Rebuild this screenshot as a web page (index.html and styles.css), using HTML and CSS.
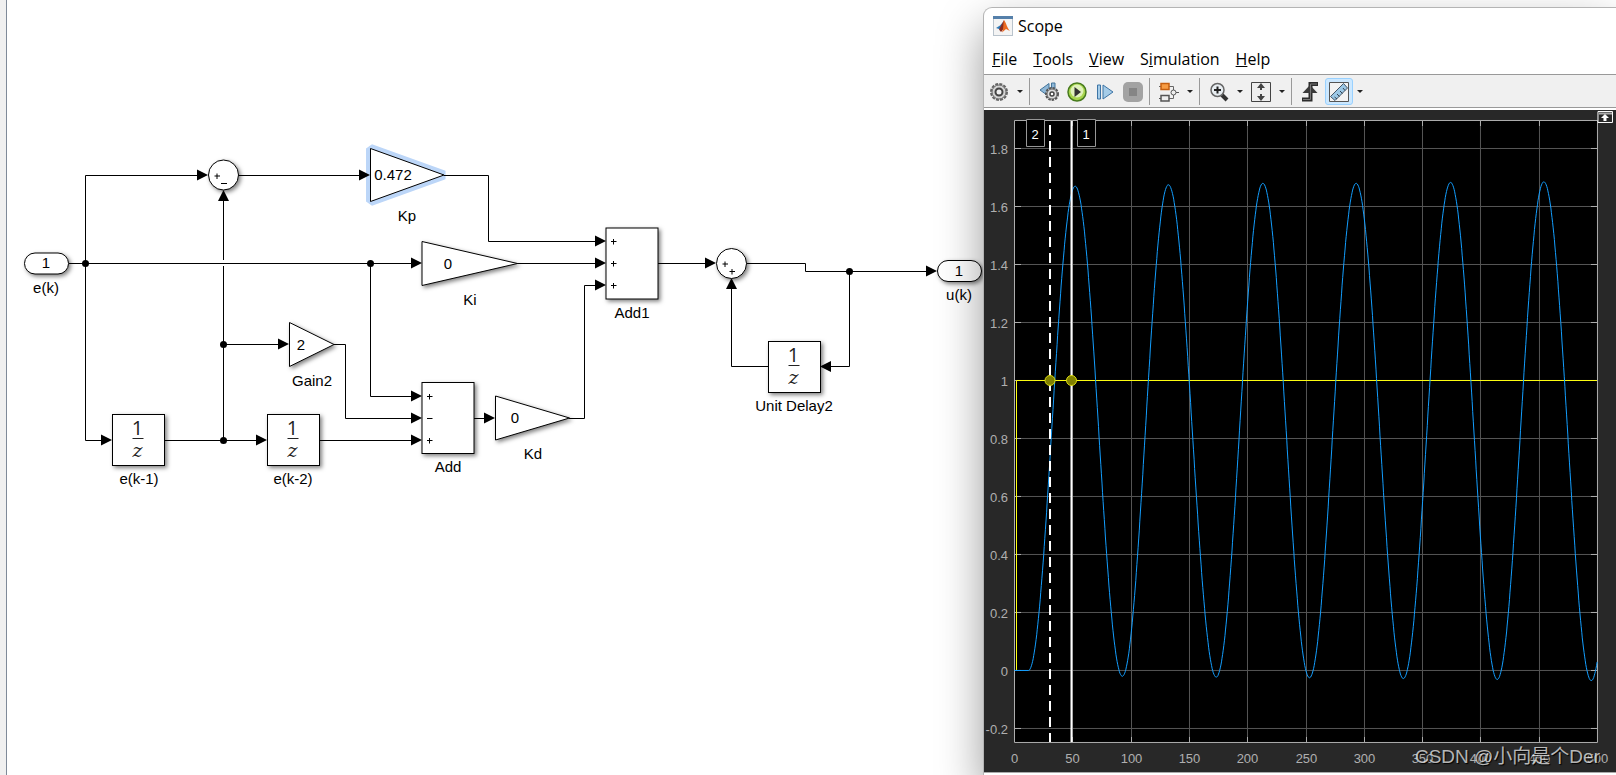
FILE: index.html
```html
<!DOCTYPE html>
<html lang="en">
<head>
    <meta charset="UTF-8">
    <meta name="viewport" content="width=device-width, initial-scale=1.0">
    <title>Scope</title>
    <link rel="stylesheet" href="styles.css">
</head>
<body>
    <main class="model">
        <svg class="diagram" width="978" height="775" viewBox="7 0 978 775">
            <defs>
                <path id="arrow" d="M0 0L-11-5.5V5.5Z"/>
                <path id="plus" d="M-2.5 0H3M0-2.5V3"/>
                <g id="delay">
                    <rect class="block" width="52" height="51"/>
                    <text class="tf" x="25" y="20">1</text>
                    <path class="bar" d="M20 24H31"/>
                    <text class="tf var" x="25" y="42">z</text>
                </g>
            </defs>

            <!-- selection glow under the Kp gain -->
            <path class="selected" d="M370.5 148.5V201.5L444 175Z"/>

            <!-- signals -->
            <g class="wires">
                <path d="M69 263.5H411M85.5 175.5V440.5M85.5 175.5H198M85.5 440.5H102"/>
                <path d="M223.5 201V260M223.5 266V440.5M223.5 344.5H279"/>
                <path d="M165 440.5H257M320 440.5H411M239 175.5H360"/>
                <path d="M444 175.5H488.5V241.5H595M517 263.5H595"/>
                <path d="M370.5 263.5V396.5H411M334 344.5H345.5V418.5H411"/>
                <path d="M474 418.5H485M569 418.5H584.5V285.5H595"/>
                <path d="M658 263.5H706M746 263.5H805.5V271.5H927"/>
                <path d="M849.5 271.5V366.5H831M769 366.5H731.5V289"/>
            </g>
            <g class="arrows">
                <use href="#arrow" x="208" y="175"/>
                <use href="#arrow" x="370" y="175"/>
                <use href="#arrow" x="422" y="263"/>
                <use href="#arrow" x="606" y="241"/>
                <use href="#arrow" x="606" y="263"/>
                <use href="#arrow" x="606" y="285"/>
                <use href="#arrow" x="289" y="344"/>
                <use href="#arrow" x="112" y="440"/>
                <use href="#arrow" x="267" y="440"/>
                <use href="#arrow" x="422" y="396"/>
                <use href="#arrow" x="422" y="418"/>
                <use href="#arrow" x="422" y="440"/>
                <use href="#arrow" x="495" y="418"/>
                <use href="#arrow" x="716" y="263"/>
                <use href="#arrow" x="937" y="271"/>
                <use href="#arrow" transform="translate(223.5 190) rotate(-90)"/>
                <use href="#arrow" transform="translate(731.5 278) rotate(-90)"/>
                <use href="#arrow" transform="translate(820 366.5) rotate(180)"/>
                <circle cx="85.5" cy="263.5" r="3.5"/>
                <circle cx="370.5" cy="263.5" r="3.5"/>
                <circle cx="223.5" cy="344.5" r="3.5"/>
                <circle cx="223.5" cy="440.5" r="3.5"/>
                <circle cx="849.5" cy="271.5" r="3.5"/>
            </g>

            <!-- blocks -->
            <rect class="block" x="24.5" y="253" width="44" height="21" rx="10.5"/>
            <text x="46" y="268">1</text>
            <text x="46" y="293">e(k)</text>

            <circle class="block" cx="223.5" cy="175" r="15"/>
            <use class="sign" href="#plus" x="217" y="176"/>
            <path class="sign" d="M221 183.5H227"/>

            <path class="block flat" d="M370.5 148.5V201.5L444 175Z"/>
            <text x="393" y="180">0.472</text>
            <text x="407" y="221">Kp</text>

            <path class="block" d="M422 241.5V285.5L517.5 263.5Z"/>
            <text x="448" y="269">0</text>
            <text x="470" y="305">Ki</text>

            <path class="block" d="M289.5 322.5V366.5L334 344.5Z"/>
            <text x="301" y="350">2</text>
            <text x="312" y="386">Gain2</text>

            <use href="#delay" x="112.5" y="414.5"/>
            <text x="139" y="484">e(k-1)</text>
            <use href="#delay" x="267.5" y="414.5"/>
            <text x="293" y="484">e(k-2)</text>

            <rect class="block" x="422" y="382.5" width="52" height="71"/>
            <use class="sign" href="#plus" x="429.5" y="396.5"/>
            <path class="sign" d="M427 418.5H432.5"/>
            <use class="sign" href="#plus" x="429.5" y="440.5"/>
            <text x="448" y="472">Add</text>

            <path class="block" d="M495.5 396V440L569.5 418Z"/>
            <text x="515" y="423">0</text>
            <text x="533" y="459">Kd</text>

            <rect class="block" x="606" y="228" width="52" height="71"/>
            <use class="sign" href="#plus" x="613.5" y="241.5"/>
            <use class="sign" href="#plus" x="613.5" y="263.5"/>
            <use class="sign" href="#plus" x="613.5" y="285.5"/>
            <text x="632" y="318">Add1</text>

            <circle class="block" cx="731.5" cy="263.5" r="15"/>
            <use class="sign" href="#plus" x="725" y="264"/>
            <use class="sign" href="#plus" x="732" y="271.5"/>

            <use href="#delay" x="768.5" y="341.5"/>
            <text x="794" y="411">Unit Delay2</text>

            <rect class="block" x="937.5" y="260.5" width="44" height="21" rx="10.5"/>
            <text x="959" y="276">1</text>
            <text x="959" y="300">u(k)</text>
        </svg>
    </main>

    <section class="scope">
        <header class="titlebar">
            <svg width="20" height="20" viewBox="0 0 20 20">
                <rect x=".5" y=".5" width="19" height="19" fill="#f4f4f4" stroke="#b9c3cc"/>
                <path d="M0 0H20V3H0Z" fill="#5580aa"/>
                <path d="M3 12L7 9.500 10 6 8.500 14 6 13Z" fill="#2f78b5"/>
                <path d="M11 4L6 13.500 8 16 11.500 12Z" fill="#8d2b1c"/>
                <path d="M11 4C13 6 14 12 17 15L13 13 9 16.500C11 12 10 7 11 4Z" fill="#ea6a20"/>
            </svg>
            <h1>Scope</h1>
        </header>
        <nav class="menubar">
            <a href="#"><u>F</u>ile</a>
            <a href="#"><u>T</u>ools</a>
            <a href="#"><u>V</u>iew</a>
            <a href="#">S<u>i</u>mulation</a>
            <a href="#"><u>H</u>elp</a>
        </nav>
        <div class="toolbar">
            <div class="group">
                <button aria-label="Configuration">
                    <svg width="20" height="20" viewBox="0 0 20 20"><circle cx="10" cy="10" r="8" fill="none" stroke="#666" stroke-width="2" stroke-dasharray="3 1.200"/><circle cx="10" cy="10" r="7" fill="#d4d4d4" stroke="#666"/><circle cx="10" cy="10" r="3.500" fill="#f0f0f0" stroke="#444" stroke-width="2"/></svg>
                </button>
                <button class="drop" aria-label="More configuration"></button>
            </div>
            <div class="group">
                <button aria-label="Step back">
                    <svg width="20" height="20" viewBox="0 0 20 20"><path d="M10 1.500L1 8 10 14.500ZM12.500 1H16V12H12.500Z" fill="#8fb8d8" stroke="#43749a"/><circle cx="13" cy="12" r="6" fill="#eee" stroke="#555" stroke-width="2" stroke-dasharray="2.500 1"/><circle cx="13" cy="12" r="5" fill="#ddd" stroke="#666"/><circle cx="13" cy="12" r="2" fill="#fff" stroke="#444" stroke-width="1.500"/></svg>
                </button>
                <button aria-label="Run">
                    <svg width="20" height="20" viewBox="0 0 20 20"><circle cx="10" cy="10" r="9" fill="#a7d64d" stroke="#477a1e" stroke-width="1.500"/><circle cx="10" cy="9" r="6.500" fill="#e0f2bb"/><path d="M7.500 5L14 10 7.500 15Z" fill="#333"/></svg>
                </button>
                <button aria-label="Step forward">
                    <svg width="20" height="20" viewBox="0 0 20 20"><path d="M2.500 3H5.500V17H2.500ZM8 3L18 10 8 17Z" fill="#a5cce8" stroke="#3d74a5"/></svg>
                </button>
                <button aria-label="Stop">
                    <svg width="20" height="20" viewBox="0 0 20 20"><rect width="20" height="20" rx="5" fill="#a3a3a3"/><path d="M6 6H14V14H6Z" fill="#858585"/></svg>
                </button>
            </div>
            <div class="group">
                <button aria-label="Highlight block">
                    <svg width="20" height="20" viewBox="0 0 20 20"><path d="M0 4.500H14.500V8M10 16.500H14.500V13" fill="none" stroke="#666"/><path d="M2 1.500H10V7.500H2Z" fill="#f79c44" stroke="#c55f10" stroke-width="1.500"/><path d="M2 13.500H10V19H2Z" fill="#eee" stroke="#555" stroke-width="1.500"/><path d="M0 16.500H2M17 10.500H20" stroke="#555"/><circle cx="14.500" cy="10.500" r="2.500" fill="#eee" stroke="#555"/></svg>
                </button>
                <button class="drop" aria-label="More highlight"></button>
            </div>
            <div class="group">
                <button aria-label="Zoom">
                    <svg width="20" height="20" viewBox="0 0 20 20"><path d="M13 13L18 18" stroke="#333" stroke-width="4"/><circle cx="8.500" cy="8" r="6.500" fill="#e8eef2" stroke="#666" stroke-width="1.500"/><path d="M5 8H12M8.500 4.500V11.500" stroke="#222" stroke-width="2"/></svg>
                </button>
                <button class="drop" aria-label="More zoom"></button>
                <button aria-label="Scale axes">
                    <svg width="20" height="20" viewBox="0 0 20 20"><path d="M.5.5H19.500V19.500H.5Z" fill="#eee" stroke="#444"/><path d="M10 1L14 6H11V8H9V6H6ZM10 19L14 14H11V12H9V14H6Z" fill="#444"/></svg>
                </button>
                <button class="drop" aria-label="More scaling"></button>
            </div>
            <div class="group">
                <button aria-label="Triggers">
                    <svg width="20" height="20" viewBox="0 0 20 20"><path d="M1 17.500H9.500V2H17" fill="none" stroke="#2c2c2c" stroke-width="4"/><path d="M9 3L16.500 11H1.500Z" fill="#3a3a3a"/><path d="M2 17.500H9.500V2H16" fill="none" stroke="#777"/></svg>
                </button>
                <button class="active" aria-label="Cursor measurements">
                    <svg width="20" height="20" viewBox="0 0 20 20"><path d="M.5.5H19.500V19.500H.5Z" fill="#f3f3f3" stroke="#555"/><path d="M1.500 14.500L14.500 1.500 18.500 6 6 18.500Z" fill="#9cc8e6" stroke="#456"/><path d="M5.500 15L8 17M8 12L10.500 14.500M11 9L13.500 11.500M14 6L16 8.500" stroke="#345"/></svg>
                </button>
                <button class="drop" aria-label="More measurements"></button>
            </div>
        </div>
        <svg class="plot" viewBox="984 110 632 662">
            <path class="axes" d="M1014.500 120.500H1597.500V742.500H1014.500Z"/>
            <g id="grid"></g>
            <g id="labels"></g>
            <path class="step" d="M1016.500 670V380.500H1597"/>
            <path class="response" id="response"/>
            <path class="cursor dashed" d="M1050 125V742"/>
            <path class="cursor" d="M1071.500 121V742"/>
            <circle class="handle" cx="1050" cy="380.500" r="5"/>
            <circle class="handle" cx="1071.500" cy="380.500" r="5"/>
            <path class="tag" d="M1026.500 119.500H1044.500V146.500H1026.500ZM1077.500 119.500H1095.500V146.500H1077.500Z"/>
            <text class="tagtext" x="1035" y="139">2</text>
            <text class="tagtext" x="1086" y="139">1</text>
            <path d="M1598 111.500H1612.500V122.500H1598Z" fill="#282828" stroke="#fff"/>
            <path d="M1599 113.500H1612" stroke="#aaa" stroke-width="2"/>
            <path d="M1605 114L1609 118H1606.500V121H1603.500V118H1601Z" fill="#fff"/>
        </svg>
        <footer class="statusbar"></footer>
        <span class="watermark">CSDN @小向是个Der</span>
    </section>

    <script>
        const px = t => 1014.5 + t * 1.166;
        const py = v => 670.5 - v * 290;
        let grid = '';
        let labels = '';

        for (let t = 0; t <= 500; t += 50) {
            const x = Math.floor(px(t)) + 0.5;
            if (t > 0 && t < 500) {
                grid += `<path class="line" d="M${x} 121V742"/><path class="tick" d="M${x} 121V126M${x} 742V737"/>`;
            }
            labels += `<text class="xlabel" x="${x}" y="763">${t}</text>`;
        }
        for (let i = -1; i <= 9; i++) {
            const y = 670.5 - i * 58;
            grid += `<path class="line" d="M1015 ${y}H1597"/><path class="tick" d="M1015 ${y}H1021M1597 ${y}H1591"/>`;
            labels += `<text class="ylabel" x="1008" y="${y + 5.5}">${i / 5}</text>`;
        }
        document.getElementById('grid').innerHTML = grid;
        document.getElementById('labels').innerHTML = labels;

        // turning points of the response: [time, value]
        const turns = [[12, 0], [52, 1.67], [92.5, -0.02], [132, 1.675], [173, -0.023], [213, 1.68], [253, -0.025],
            [293, 1.68], [333.5, -0.028], [374, 1.683], [414, -0.031], [454, 1.685], [494.7, -0.035], [535, 1.69]];
        let d = `M${px(0)} ${py(0)}`;
        for (let i = 0; i < turns.length - 1; i++) {
            const [t0, v0] = turns[i];
            const [t1, v1] = turns[i + 1];
            for (let t = t0; t < t1 && t <= 500; t += 0.5) {
                const v = v0 + (v1 - v0) * (1 - Math.cos(Math.PI * (t - t0) / (t1 - t0))) / 2;
                d += `L${px(t).toFixed(1)} ${py(v).toFixed(1)}`;
            }
        }
        document.getElementById('response').setAttribute('d', d);
    </script>
</body>
</html>
```
FILE: styles.css
```css
* {
    margin: 0;
    padding: 0;
    box-sizing: border-box;
}

body {
    display: flex;
    min-height: 100vh;
    overflow: hidden;
    background: #fff;
    font-family: "Liberation Sans", Arial, sans-serif;
}

.model {
    flex: 1;
    min-width: 0;
    overflow: hidden;
    border-left: 6px solid #f0f0f0;
    box-shadow: inset 1px 0 #7f8a99;
    padding-left: 1px;
}

.diagram {
    display: block;
}

.diagram text {
    font-size: 15px;
    text-anchor: middle;
}

.diagram .tf {
    font-family: "Open Sans", sans-serif;
    font-size: 20px;
    fill: #222;
}

.diagram .var {
    font-family: "DejaVu Serif", serif;
    font-size: 19px;
    font-style: italic;
}

.bar {
    stroke: #222;
}

.wires {
    fill: none;
    stroke: #000;
}

.block {
    fill: #fff;
    stroke: #000;
    filter: drop-shadow(2px 2px 2px rgba(0, 0, 0, 0.5));
}

.flat {
    filter: none;
}

.selected {
    fill: none;
    stroke: #bcd6f8;
    stroke-width: 9px;
    stroke-linejoin: bevel;
}

.sign {
    stroke: #000;
}

.scope {
    position: relative;
    width: 39.17%;
    margin-top: 7px;
    background: #fff;
    border: 1px solid #b4b4b4;
    border-width: 1px 0 0 1px;
    border-top-left-radius: 9px;
    box-shadow: 0 20px 46px rgba(0, 0, 0, 0.4);
}

.titlebar {
    display: flex;
    align-items: center;
    gap: 5px;
    height: 35px;
    padding-left: 9px;
}

.titlebar h1 {
    font: 16px "Open Sans", sans-serif;
}

.menubar {
    display: flex;
    align-items: center;
    gap: 16px;
    height: 31px;
    padding-left: 8px;
}

.menubar a {
    color: #000;
    font: 16px "Open Sans", sans-serif;
    text-decoration: none;
}

.toolbar {
    display: flex;
    align-items: center;
    height: 36px;
    padding-left: 1px;
    background: #f0f0f0;
    border-top: 1px solid #999;
    border-bottom: 2px solid #fff;
    box-shadow: inset 0 -1px #999;
}

.group {
    display: flex;
    align-items: center;
    height: 27px;
    padding-right: 2px;
}

.group + .group {
    padding-left: 5px;
    border-left: 1px solid #999;
}

button {
    display: flex;
    align-items: center;
    justify-content: center;
    width: 28px;
    height: 27px;
    border: 1px solid transparent;
    border-radius: 3px;
    background: none;
}

.drop {
    width: 14px;
}

.drop::before {
    content: "";
    border: 3px solid transparent;
    border-top-color: #222;
    border-bottom: 0;
}

.active {
    background: #cce8ff;
    border-color: #99d1ff;
}

.plot {
    display: block;
    width: 100%;
    background: #282828;
}

.axes {
    fill: #000;
    stroke: #afafaf;
}

#grid {
    fill: none;
}

.line {
    stroke: #555;
}

.tick {
    stroke: #afafaf;
}

.plot text {
    font-size: 13px;
    fill: #afafaf;
    text-anchor: middle;
}

.plot .ylabel {
    text-anchor: end;
}

.plot .tagtext {
    fill: #fff;
}

.step {
    fill: none;
    stroke: #ffff11;
}

.response {
    fill: none;
    stroke: #139fff;
}

.cursor {
    stroke: #fff;
    stroke-width: 2px;
}

.dashed {
    stroke-dasharray: 10 6;
}

.handle {
    fill: #808000;
    stroke: #dddd11;
}

.tag {
    fill: #000;
    stroke: #999;
}

.statusbar {
    height: 4px;
    border-top: 1px solid #aaa;
}

.watermark {
    position: absolute;
    right: 16px;
    bottom: 8px;
    color: rgba(255, 255, 255, 0.7);
    font: 19px "Liberation Sans", "Noto Sans CJK SC", sans-serif;
    text-shadow: 1px 1px 1px #000;
}
```
